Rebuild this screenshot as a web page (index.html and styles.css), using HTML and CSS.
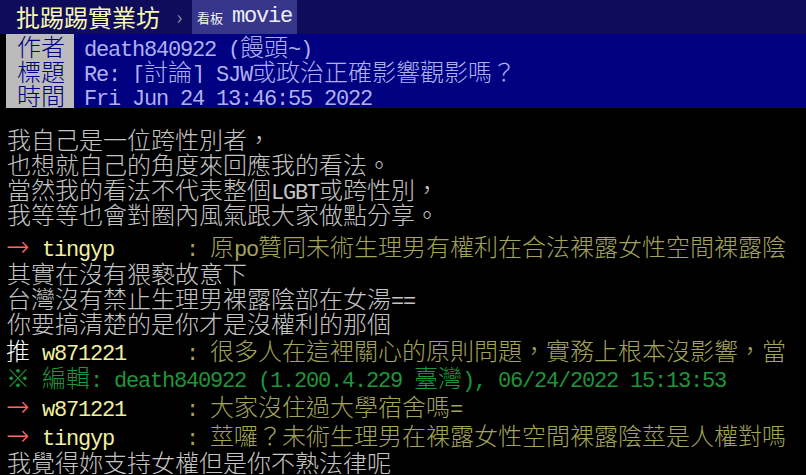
FILE: index.html
```html
<!DOCTYPE html>
<html lang="zh-Hant">
<head>
    <meta charset="UTF-8">
    <meta name="viewport" content="width=device-width, initial-scale=1.0">
    <title>Re: [討論] SJW或政治正確影響觀影嗎？ - 看板 movie - 批踢踢實業坊</title>
    <link rel="stylesheet" href="styles.css">
</head>

<body>
    <div id="topbar">
        <a class="logo" href="#">批踢踢實業坊</a>
        <span class="sep">›</span>
        <a class="board" href="#"><span class="board-label">看板</span><span class="en">movie</span></a>
    </div>

    <div id="main-content">
        <div class="metaline">
            <span class="meta-tag">作者</span>
            <span class="meta-value"><span class="en">death840922 (</span>饅頭<span class="en">~)</span></span>
        </div>
        <div class="metaline">
            <span class="meta-tag">標題</span>
            <span class="meta-value"><span class="en">Re: [</span>討論<span class="en">] SJW</span>或政治正確影響觀影嗎？</span>
        </div>
        <div class="metaline">
            <span class="meta-tag">時間</span>
            <span class="meta-value"><span class="en">Fri Jun 24 13:46:55 2022</span></span>
        </div>

        <div class="text">
            我自己是一位跨性別者，<br>
            也想就自己的角度來回應我的看法。<br>
            當然我的看法不代表整個<span class="en">LGBT</span>或跨性別，<br>
            我等等也會對圈內風氣跟大家做點分享。
        </div>

        <div class="push first">
            <span class="push-tag">→</span>
            <span class="push-userid en">tingyp</span>
            <span class="push-content"><span class="en">: </span>原<span class="en">po</span>贊同未術生理男有權利在合法裸露女性空間裸露陰</span>
        </div>

        <div class="text">
            其實在沒有猥褻故意下<br>
            台灣沒有禁止生理男裸露陰部在女湯<span class="en">==</span><br>
            你要搞清楚的是你才是沒權利的那個
        </div>

        <div class="push">
            <span class="push-tag good">推</span>
            <span class="push-userid en">w871221</span>
            <span class="push-content"><span class="en">: </span>很多人在這裡關心的原則問題，實務上根本沒影響，當</span>
        </div>
        <div class="edit">※<span class="en"> </span>編輯<span class="en">: death840922 (1.200.4.229 </span>臺灣<span class="en">), 06/24/2022 15:13:53</span></div>
        <div class="push">
            <span class="push-tag">→</span>
            <span class="push-userid en">w871221</span>
            <span class="push-content"><span class="en">: </span>大家沒住過大學宿舍嗎<span class="en">=</span></span>
        </div>
        <div class="push">
            <span class="push-tag">→</span>
            <span class="push-userid en">tingyp</span>
            <span class="push-content"><span class="en">: </span>莖囉？未術生理男在裸露女性空間裸露陰莖是人權對嗎</span>
        </div>

        <div class="text">
            我覺得妳支持女權但是你不熟法律呢
        </div>
    </div>
</body>
</html>
```

FILE: styles.css
```css
body {
    margin: 0;
    background-color: #000;
    color: #c4c4c4;
    font-family: "Noto Sans CJK TC", sans-serif;
    font-size: 24px;
    font-weight: 300;
    overflow: hidden;
}

a {
    text-decoration: none;
}

/* 半形字: 12px 一格 */
.en {
    font-family: "Liberation Mono", monospace;
    font-size: 22px;
    font-weight: normal;
    letter-spacing: -1.2px;
    line-height: 0;
    white-space: pre;
}

#topbar {
    display: flex;
    height: 34px;
    padding-left: 16px;
    background-color: #0f0c5c;
}

.logo {
    color: #f8f8b0;
    font-weight: normal;
    line-height: 34px;
}

.sep {
    width: 32px;
    padding-left: 7px;
    box-sizing: border-box;
    text-align: center;
    color: #aaa;
    font-size: 20px;
    line-height: 34px;
}

.board {
    display: flex;
    align-items: center;
    padding: 0 5px 0 5px;
    background-color: #36368c;
    color: #eee;
}

.board-label {
    font-size: 13px;
    font-weight: normal;
    margin-right: 9px;
}

#main-content {
    padding-left: 6px;
}

.metaline {
    display: flex;
    height: 24.7px;
    line-height: 24.7px;
}

.meta-tag {
    width: 68px;
    padding-left: 11px;
    box-sizing: border-box;
    background-color: #bbb;
    color: #000080;
}

.meta-value {
    flex: 1;
    padding-left: 10px;
    background-color: #000080;
    color: #b0b0f0;
}

.text {
    line-height: 25px;
    padding-left: 1px;
}

.metaline + .text {
    margin-top: 17.5px;
}

.push {
    display: flex;
    align-items: baseline;
    height: 29px;
    line-height: 29px;
    white-space: pre;
}

.push.first {
    margin-top: 5px;
}

.push-tag {
    width: 36px;
    color: #f66;
    font-family: "DejaVu Sans", sans-serif;
    font-size: 28px;
    font-weight: 200;
}

.push-tag.good {
    color: #fff;
    font-family: "Noto Sans CJK TC", sans-serif;
    font-size: 24px;
    font-weight: 300;
}

.push-userid {
    width: 144px;
    line-height: 29px;
    color: #f0f0a0;
}

.push-content {
    color: #a3a35a;
}

.edit {
    height: 29px;
    line-height: 29px;
    margin-top: -2px;
    color: #1e963c;
    white-space: pre;
}
```
